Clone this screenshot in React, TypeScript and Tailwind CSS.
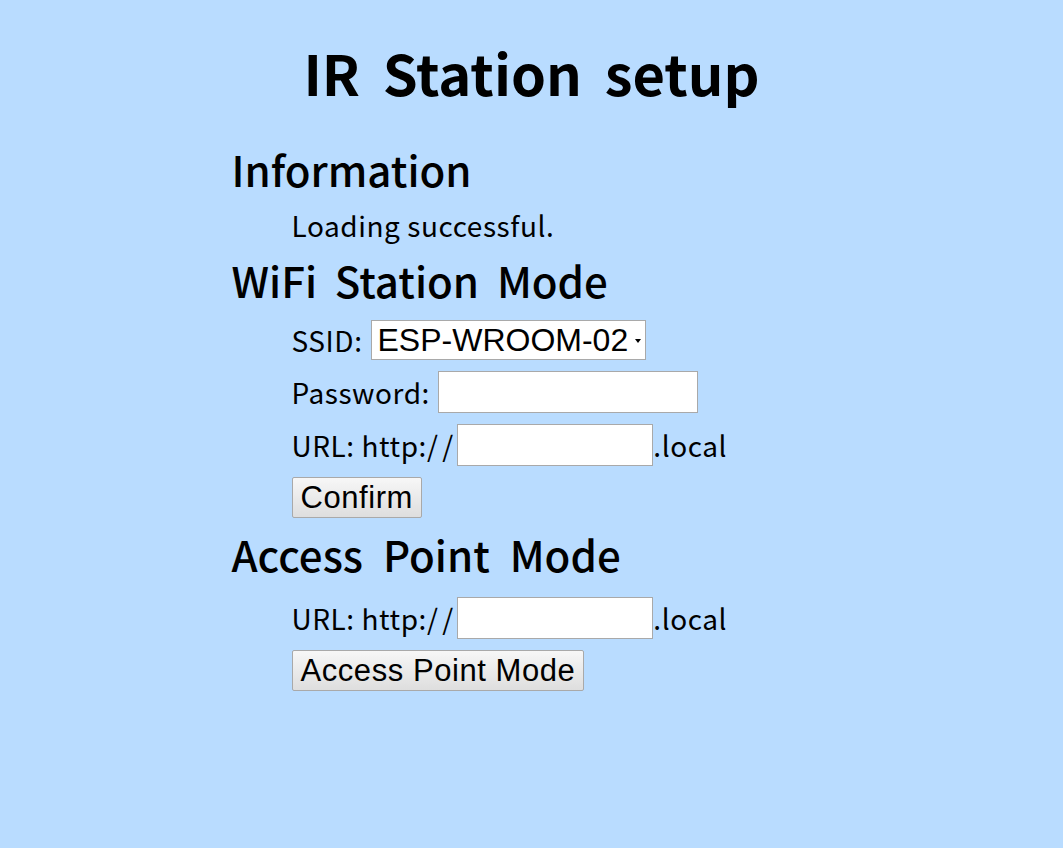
import React from 'react'

const jp = "font-['Noto_Sans_CJK_JP','Noto_Sans',sans-serif]"
const ctl = "font-['Liberation_Sans',Arial,sans-serif]"

function TextBox({ w }: { w: string }) {
  return (
    <input
      type="text"
      className={`${w} h-[42px] border border-[#a9a9a9] bg-white px-1 text-[32px] ${ctl} outline-none`}
    />
  )
}

function Btn({ label }: { label: string }) {
  return (
    <button
      className={`h-[41px] rounded-[2px] border border-[#a9a9a9] bg-gradient-to-b from-[#f7f7f7] to-[#dedede] px-[8px] text-[31px] leading-none text-black ${ctl}`}
    >
      {label}
    </button>
  )
}

export default function App() {
  return (
    <div className={`min-h-screen bg-[#b9dcff] text-black ${jp}`}>
      <div className="mx-auto w-[600px] pt-[30px]">
        <h1 className="text-center text-[56px] font-semibold leading-[84px] [word-spacing:0.18em]">
          IR Station setup
        </h1>

        <h2 className="mt-[27px] text-[42px] font-medium leading-[56px] [word-spacing:0.2em]">Information</h2>
        <div className="ml-[60px] mt-[7px] text-[28px] leading-[42px] tracking-[0.02em]">Loading successful.</div>

        <h2 className="mt-[6px] text-[42px] font-medium leading-[56px] [word-spacing:0.2em]">WiFi Station Mode</h2>
        <div className="ml-[60px] mt-[12px] flex flex-col gap-[11px] text-[28px] tracking-[0.02em]">
          <div className="flex h-[40px] items-center">
            <span>SSID:</span>
            <div
              className={`ml-[8px] flex h-[40px] w-[275px] items-center justify-between border border-[#a9a9a9] bg-white pl-[6px] pr-[4px] text-[32px] tracking-normal ${ctl}`}
            >
              <span>ESP-WROOM-02</span>
              <svg width="6" height="4" viewBox="0 0 6 4" className="mt-[2px]">
                <path d="M0 0h6L3 4z" fill="#000" />
              </svg>
            </div>
          </div>
          <div className="flex h-[42px] items-center">
            <span className="mr-[8px]">Password:</span>
            <TextBox w="w-[260px]" />
          </div>
          <div className="flex h-[42px] items-center">
            <span>
              URL: http:<span className="tracking-[0.15em]">//</span>
            </span>
            <TextBox w="w-[196px]" />
            <span>.local</span>
          </div>
          <div className="flex h-[41px] items-center">
            <Btn label="Confirm" />
          </div>
        </div>

        <h2 className="mt-[8px] text-[42px] font-medium leading-[56px] [word-spacing:0.25em]">Access Point Mode</h2>
        <div className="ml-[60px] mt-[15px] flex flex-col gap-[11px] text-[28px] tracking-[0.02em]">
          <div className="flex h-[42px] items-center">
            <span>
              URL: http:<span className="tracking-[0.15em]">//</span>
            </span>
            <TextBox w="w-[196px]" />
            <span>.local</span>
          </div>
          <div className="flex h-[41px] items-center">
            <Btn label="Access Point Mode" />
          </div>
        </div>
      </div>
    </div>
  )
}
